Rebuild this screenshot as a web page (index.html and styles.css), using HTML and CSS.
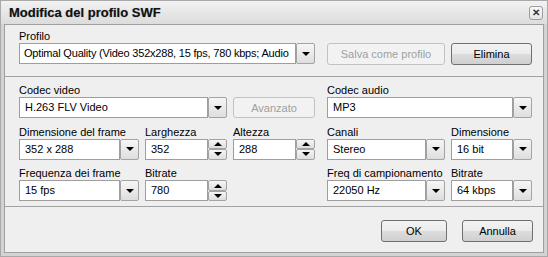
FILE: index.html
```html
<!DOCTYPE html>
<html lang="it">
<head>
    <meta charset="UTF-8">
    <title>Modifica del profilo SWF</title>
    <link rel="stylesheet" href="styles.css">
</head>
<body>
    <div class="window">
        <div class="titlebar">
            <span class="title">Modifica del profilo SWF</span>
            <span class="close">&#x2715;</span>
        </div>

        <div class="client">
            <!-- profilo -->
            <div class="section grid profile">
                <div class="field span-left">
                    <div class="label">Profilo</div>
                    <div class="combo">
                        <div class="value">Optimal Quality (Video 352x288, 15 fps, 780 kbps; Audio</div>
                        <div class="drop"><span class="arrow-down"></span></div>
                    </div>
                </div>
                <div class="field col-a1">
                    <div class="label"></div>
                    <div class="btn disabled">Salva come profilo</div>
                </div>
                <div class="field col-a2">
                    <div class="label"></div>
                    <div class="btn">Elimina</div>
                </div>
            </div>

            <!-- video / audio -->
            <div class="section grid settings">
                <div class="field span-v12">
                    <div class="label">Codec video</div>
                    <div class="combo">
                        <div class="value">H.263 FLV Video</div>
                        <div class="drop"><span class="arrow-down"></span></div>
                    </div>
                </div>
                <div class="field">
                    <div class="label"></div>
                    <div class="btn disabled">Avanzato</div>
                </div>
                <div class="field span-audio">
                    <div class="label">Codec audio</div>
                    <div class="combo">
                        <div class="value">MP3</div>
                        <div class="drop"><span class="arrow-down"></span></div>
                    </div>
                </div>

                <div class="field">
                    <div class="label">Dimensione del frame</div>
                    <div class="combo">
                        <div class="value">352 x 288</div>
                        <div class="drop"><span class="arrow-down"></span></div>
                    </div>
                </div>
                <div class="field">
                    <div class="label">Larghezza</div>
                    <div class="combo">
                        <div class="value">352</div>
                        <div class="spin">
                            <div class="spin-btn"><span class="arrow-up"></span></div>
                            <div class="spin-btn"><span class="arrow-down"></span></div>
                        </div>
                    </div>
                </div>
                <div class="field">
                    <div class="label">Altezza</div>
                    <div class="combo">
                        <div class="value">288</div>
                        <div class="spin">
                            <div class="spin-btn"><span class="arrow-up"></span></div>
                            <div class="spin-btn"><span class="arrow-down"></span></div>
                        </div>
                    </div>
                </div>
                <div class="field col-a1">
                    <div class="label">Canali</div>
                    <div class="combo">
                        <div class="value">Stereo</div>
                        <div class="drop"><span class="arrow-down"></span></div>
                    </div>
                </div>
                <div class="field col-a2">
                    <div class="label">Dimensione</div>
                    <div class="combo">
                        <div class="value">16 bit</div>
                        <div class="drop"><span class="arrow-down"></span></div>
                    </div>
                </div>

                <div class="field">
                    <div class="label">Frequenza dei frame</div>
                    <div class="combo">
                        <div class="value">15 fps</div>
                        <div class="drop"><span class="arrow-down"></span></div>
                    </div>
                </div>
                <div class="field">
                    <div class="label">Bitrate</div>
                    <div class="combo">
                        <div class="value">780</div>
                        <div class="spin">
                            <div class="spin-btn"><span class="arrow-up"></span></div>
                            <div class="spin-btn"><span class="arrow-down"></span></div>
                        </div>
                    </div>
                </div>
                <div class="field col-a1">
                    <div class="label">Freq di campionamento</div>
                    <div class="combo">
                        <div class="value">22050 Hz</div>
                        <div class="drop"><span class="arrow-down"></span></div>
                    </div>
                </div>
                <div class="field col-a2">
                    <div class="label">Bitrate</div>
                    <div class="combo">
                        <div class="value">64 kbps</div>
                        <div class="drop"><span class="arrow-down"></span></div>
                    </div>
                </div>
            </div>

            <!-- pulsanti -->
            <div class="section footer">
                <div class="btn ok">OK</div>
                <div class="btn cancel">Annulla</div>
            </div>
        </div>
    </div>
</body>
</html>
```

FILE: styles.css
```css
* {
    box-sizing: border-box;
}

body {
    margin: 0;
    background: #ffffff;
    font-family: "Liberation Sans", Arial, sans-serif;
    font-size: 11px;
    color: #000;
}

.window {
    width: 548px;
    height: 257px;
    border: 1px solid #a9a9a9;
    background: #d3d3d3;
    padding: 0 3px 3px 3px;
    display: flex;
    flex-direction: column;
}

.titlebar {
    height: 23px;
    display: flex;
    align-items: center;
    justify-content: space-between;
    background: linear-gradient(#f2f2f2, #dcdcdc);
    margin: 0 -3px;
    padding-left: 8px;
    padding-right: 4px;
}

.title {
    font-weight: bold;
    font-size: 13px;
    color: #111;
    text-shadow: 0 0 1px rgba(0, 0, 0, 0.35);
}

.close {
    width: 14px;
    height: 14px;
    border: 1px solid #9c9c9c;
    border-radius: 3px;
    background: linear-gradient(#fafafa, #e4e4e4);
    font-size: 10px;
    font-weight: bold;
    line-height: 12px;
    text-align: center;
    color: #333;
}

.client {
    flex: 1;
    border: 1px solid #a0a0a0;
    background: #efefef;
    display: flex;
    flex-direction: column;
}

.section {
    padding-left: 14px;
}

.section + .section {
    border-top: 1px solid #a2a2a2;
}

.grid {
    display: grid;
    grid-template-columns: 120px 82px 82px 0 118px 81px;
    column-gap: 6px;
    row-gap: 3px;
}

.profile {
    padding-top: 5px;
    height: 51px;
}

.profile .value {
    padding-left: 4px;
    letter-spacing: -0.2px;
}

.settings {
    padding-top: 7px;
    height: 130px;
}

.span-left { grid-column: 1 / 4; }
.span-v12 { grid-column: 1 / 3; }
.span-audio { grid-column: 5 / 7; }
.col-a1 { grid-column: 5; }
.col-a2 { grid-column: 6; }

.label {
    height: 13px;
    line-height: 13px;
    white-space: nowrap;
}

.combo {
    height: 21px;
    display: flex;
}

.value {
    flex: 1;
    min-width: 0;
    overflow: hidden;
    white-space: nowrap;
    background: #fff;
    border: 1px solid #9e9e9e;
    padding-left: 5px;
    line-height: 19px;
}

.drop {
    width: 19px;
    border: 1px solid #a3a3a3;
    border-radius: 2px;
    background: linear-gradient(#f6f6f6, #dedede);
    display: flex;
    align-items: center;
    justify-content: center;
}

.spin {
    width: 19px;
    display: flex;
    flex-direction: column;
}

.spin-btn {
    flex: 1;
    border: 1px solid #a3a3a3;
    border-radius: 2px;
    background: linear-gradient(#f6f6f6, #dedede);
    display: flex;
    align-items: center;
    justify-content: center;
}

.arrow-down {
    width: 0;
    height: 0;
    border-left: 4px solid transparent;
    border-right: 4px solid transparent;
    border-top: 4px solid #000;
}

.arrow-up {
    width: 0;
    height: 0;
    border-left: 4px solid transparent;
    border-right: 4px solid transparent;
    border-bottom: 4px solid #000;
}

.btn {
    height: 22px;
    border: 1px solid #707070;
    border-radius: 3px;
    background: linear-gradient(#f3f3f3 0%, #ebebeb 50%, #dddddd 51%, #cfcfcf 100%);
    display: flex;
    align-items: center;
    justify-content: center;
    white-space: nowrap;
}

.btn.disabled {
    border-color: #c2c2c2;
    background: #f2f2f2;
    color: #a0a0a0;
}

.settings .btn {
    height: 21px;
}

.footer {
    flex: 1;
    display: flex;
    justify-content: flex-end;
    align-items: flex-start;
    padding-top: 13px;
    padding-right: 10px;
    gap: 15px;
}

.btn.ok {
    width: 66px;
}

.btn.cancel {
    width: 71px;
}
```
